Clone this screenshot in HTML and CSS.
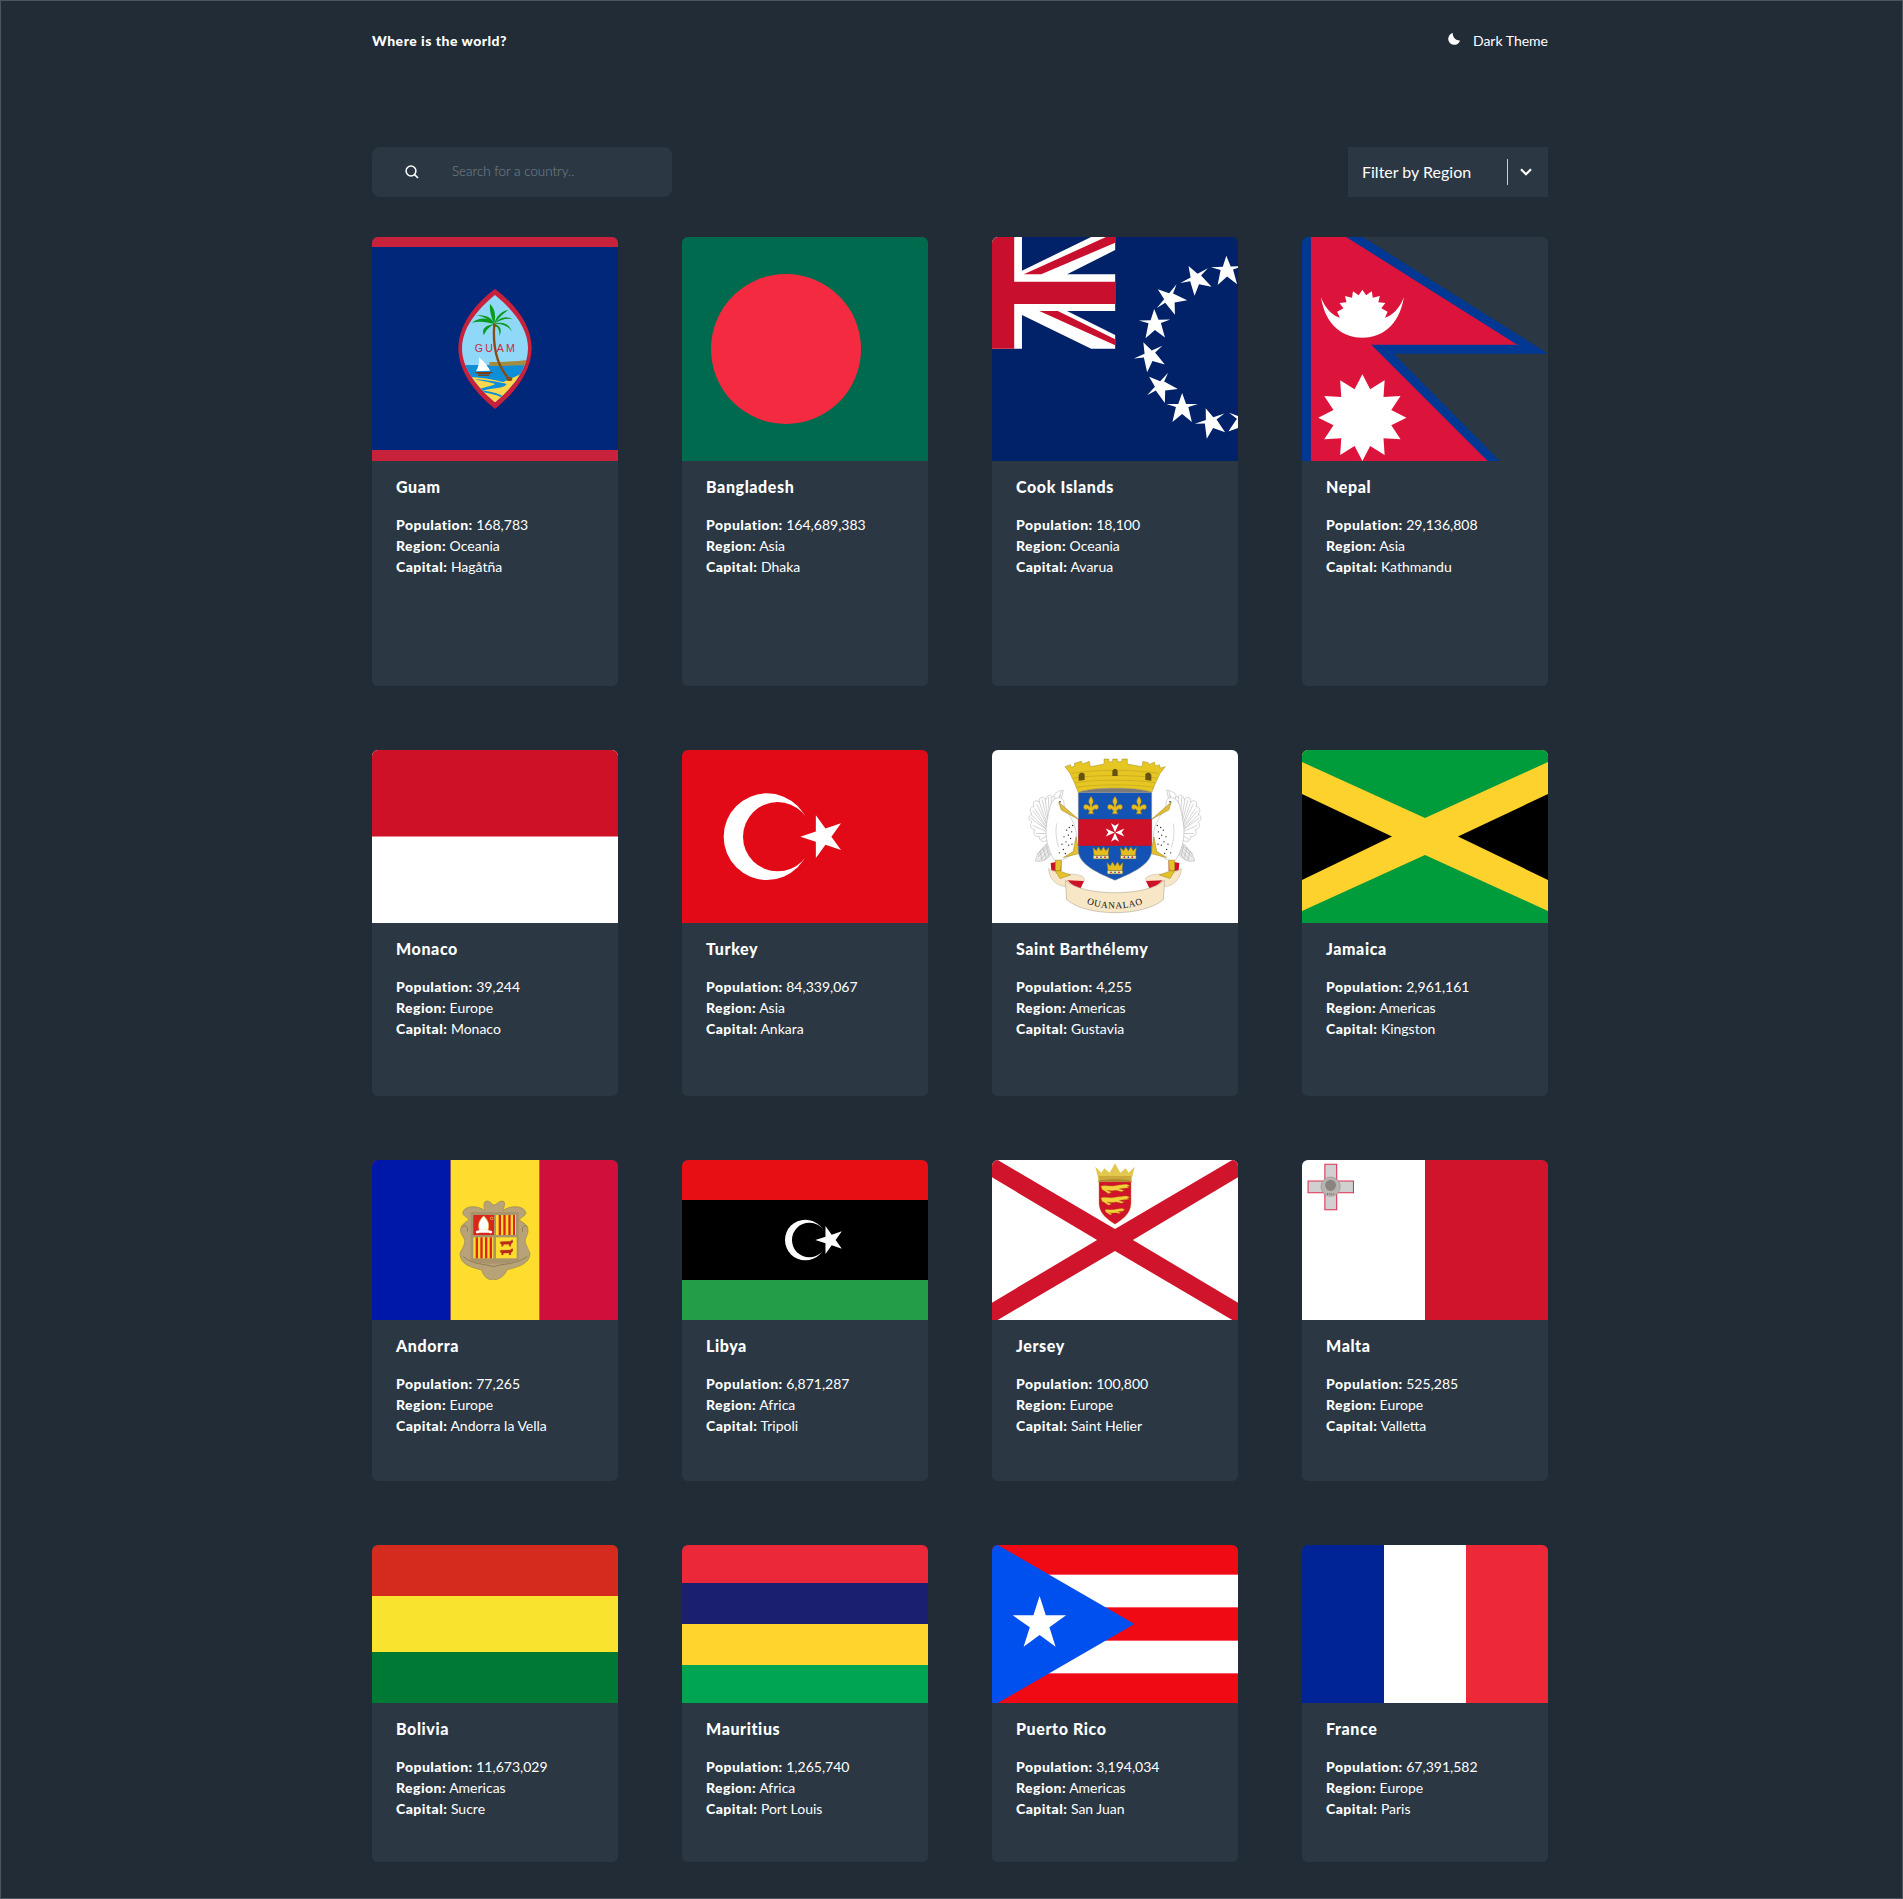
FILE: index.html
```html
<!DOCTYPE html>
<html lang="en">
<head>
<meta charset="utf-8">
<title>Where is the world?</title>
<link rel="stylesheet" href="styles.css">
</head>
<body>
<div class="page">
<header class="topbar">
  <h1 class="brand">Where is the world?</h1>
  <div class="theme">
    <svg class="moon" viewBox="0 0 12 12"><path d="M4.800 0A6 6 0 1 0 12 7.600 6.800 6.800 0 0 1 4.800 0Z" fill="#fff"/></svg>
    <span class="theme-label">Dark Theme</span>
  </div>
</header>

<section class="toolbar">
  <label class="search">
    <svg class="search-icon" viewBox="0 0 14 14"><circle cx="6" cy="6" r="4.900" fill="none" stroke="#fff" stroke-width="1.500"/><path d="M9.600 9.600 13 13" stroke="#fff" stroke-width="1.600"/></svg>
    <input class="search-input" type="text" placeholder="Search for a country..">
  </label>
  <div class="filter">
    <span class="filter-label">Filter by Region</span>
    <span class="filter-sep"></span>
    <svg class="chevron" viewBox="0 0 12 8"><path d="M1 1.200 6 6.200 11 1.200" fill="none" stroke="#fff" stroke-width="2.200"/></svg>
  </div>
</section>

<svg class="defs" width="0" height="0">
  <defs>
    <path id="star5" d="M0-16 3.800-5 15.200-5 6-1.900 9.400 12.900 0 4.900-9.400 12.900-6-1.900-15.200-5-3.800-5Z"/>
    <path id="fleur" d="M0-28C8-18 8-10 3-4L3 4C8-4 22-8 22 4 22 12 14 14 12 8 8 12 6 14 4 14L8 24-8 24-4 14C-6 14-8 12-12 8-14 14-22 12-22 4-22-8-8-4-3 4L-3-4C-8-10-8-18 0-28Z" fill="#e6bd1e" stroke="#a5851a" stroke-width="1.500"/>
    <g id="mini-crown">
      <path d="M-24-20-14-10-8-22 0-10 8-22 14-10 24-20 21 4-21 4Z" fill="#e6bd1e" stroke="#8f7a1c" stroke-width="1.500"/>
      <rect x="-23" y="4" width="46" height="10" fill="#f3e6a8" stroke="#8f7a1c" stroke-width="1.500"/>
      <circle cx="-12" cy="9" r="2.500" fill="#ce1126"/><circle cx="0" cy="9" r="2.500" fill="#1353b4"/><circle cx="12" cy="9" r="2.500" fill="#ce1126"/>
    </g>
    <g id="pelican">
      <g fill="#fff" stroke="#a9a9a9" stroke-width="1.500">
        <path d="M250 150C235 152 225 158 218 172 210 160 200 165 198 178 188 168 176 170 178 186 166 176 156 186 162 200 150 198 146 212 156 222 144 226 144 240 156 246 148 254 152 268 164 268 158 280 166 292 178 288 176 302 190 308 202 300L232 230Z"/>
        <path d="M214 262 244 153M212 262 224 168M210 262 205 170M208 264 186 178M206 266 170 192M204 268 158 212M202 270 152 234M200 274 158 256M202 280 168 280M206 284 182 298"/>
        <path d="M218 262 240 165M214 262 214 170M209 264 195 175M206 266 178 186M204 268 164 205M202 270 154 224"/>
        <path d="M200 312C185 322 170 345 166 362 188 368 208 355 222 330L216 306Z" fill="#ececec"/>
        <path d="M174 350 208 316M182 358 214 322M170 342 200 318M192 360 218 330M198 312 206 345M188 322 198 352M180 332 186 360"/>
      </g>
      <path d="M220 180C232 168 252 170 252 190 250 212 292 238 290 300 286 345 255 362 225 362 205 335 193 290 200 250 205 220 210 190 220 180Z" fill="#fff" stroke="#aaa" stroke-width="1.500"/>
      <path d="M230 250C226 270 228 300 236 320" fill="none" stroke="#999" stroke-width="1.200"/>
      <path d="M236 186 296 238 244 210Z" fill="#e0bd3a" stroke="#96801f" stroke-width="1.500"/>
      <circle cx="240" cy="185" r="2.400" fill="#222"/>
      <g fill="#222">
        <circle cx="278" cy="256" r="2"/><circle cx="268" cy="262" r="2"/><circle cx="260" cy="270" r="2"/><circle cx="275" cy="275" r="2"/><circle cx="265" cy="285" r="2"/><circle cx="252" cy="290" r="2"/><circle cx="272" cy="295" r="2"/><circle cx="258" cy="305" r="2"/><circle cx="246" cy="312" r="2"/><circle cx="266" cy="315" r="2"/><circle cx="250" cy="328" r="2"/><circle cx="238" cy="338" r="2"/><circle cx="276" cy="312" r="2"/><circle cx="256" cy="340" r="2"/>
      </g>
      <path d="M288 290 298 340 250 352 280 334Z" fill="#e6c22a" stroke="#96801f" stroke-width="1.500"/>
      <path d="M212 368 244 362 244 392 226 392 214 390Z" fill="#ce1126"/>
      <path d="M226 360V392H242L244 360Z" fill="#e6c22a" stroke="#96801f" stroke-width="1.500"/>
      <path d="M206 385C225 400 225 392 260 402 300 400 318 410 312 422 310 430 268 420 258 438 228 440 205 410 206 385Z" fill="#f7e7c6" stroke="#b8ac98" stroke-width="1.500"/>
      <path d="M226 392 238 392 272 404 240 415Z" fill="#e6c22a" stroke="#96801f" stroke-width="1.500"/>
      <path d="M262 420 312 422 298 452Z" fill="#ce1126"/>
    </g>
    <g id="lion">
      <path d="M-40-6C-30-12-15-4 0-8 12-10 26-12 33-12L42-8 34-5 40-2C30 0 20-1 12 2L26 6 18 10 4 6C-6 8-14 8-22 6L-10 12-18 16-32 6C-38 6-36-1-40-6Z" fill="#f3d13a" stroke="#a36c10" stroke-width="1"/>
    </g>
    <g id="bull">
      <path d="M-18-5 12-6 18-11 20-4 14 2 13 9 9 9 8 3-8 3-10 9-14 9-14 3-18 1Z" fill="#c0281e" stroke="#7c4a20" stroke-width=".8"/>
    </g>
    <clipPath id="seal-clip"><path d="M405 195C460 240 504 295 504 355 504 415 460 470 405 517 350 470 306 415 306 355 306 295 350 240 405 195Z"/></clipPath>
    <clipPath id="jersey-clip"><path d="M305 95H395V160C395 190 370 210 350 223 330 210 305 190 305 160Z"/></clipPath>
    <path id="ribbon-curve" d="M296 476C346 514 464 514 514 476"/>
  </defs>
</svg>

<main class="grid">

<article class="card">
  <svg class="flag flag-tall" viewBox="36 21 738 672" preserveAspectRatio="none">
    <rect x="36" y="21" width="738" height="672" fill="#c8213c"/>
    <rect x="36" y="51" width="738" height="609" fill="#01277a"/>
    <path d="M405 177C470 225 515 290 515 355 515 420 470 485 405 537 340 485 295 420 295 355 295 290 340 225 405 177Z" fill="#c8213c"/>
    <g clip-path="url(#seal-clip)">
      <rect x="290" y="190" width="230" height="340" fill="#8fd8f8"/>
      <rect x="290" y="405" width="230" height="60" fill="#0f8fd8"/>
      <path d="M388 396C430 396 470 394 502 390V406C470 406 420 408 388 408Z" fill="#a28c42"/>
      <path d="M318 442C360 440 395 448 430 456 450 448 480 432 505 424V530H300Z" fill="#fdd74e"/>
      <path d="M345 448C385 450 425 458 440 462 430 478 400 472 368 482 395 484 420 490 440 505L420 500C400 490 370 490 352 480 372 470 400 468 405 462 390 456 365 454 345 448Z" fill="#0f8fd8"/>
    </g>
    <path d="M403 280C398 340 404 400 448 448" fill="none" stroke="#8a4a12" stroke-width="7"/>
    <ellipse cx="448" cy="447" rx="9" ry="6" fill="#8a4a12"/>
    <g fill="#0b9a1f">
      <path d="M403 282C385 260 360 262 336 278 358 272 382 276 403 282Z"/>
      <path d="M403 282C380 285 362 295 372 316 378 298 390 290 403 282Z"/>
      <path d="M403 282C395 262 380 255 345 256 368 258 385 268 403 282Z"/>
      <path d="M403 282C408 255 405 238 390 222 388 240 393 262 403 282Z"/>
      <path d="M403 282C420 258 432 250 445 240 425 243 408 258 403 282Z"/>
      <path d="M403 282C425 266 442 264 458 268 438 256 418 262 403 282Z"/>
      <path d="M403 282C428 280 448 290 455 305 450 282 425 272 403 282Z"/>
      <path d="M403 282C415 292 420 305 418 318 428 300 420 285 403 282Z"/>
    </g>
    <path d="M403 280 412 290 399 290Z" fill="#8a4a12"/>
    <text class="seal-text" x="344" y="367">GU</text>
    <text class="seal-text" x="410" y="367">AM</text>
    <path d="M357 382C372 395 385 410 390 422L348 424C356 412 358 396 357 382Z" fill="#fff"/>
    <path d="M342 426H400L388 433H356Z" fill="#7e3b10"/>
    <path d="M354 436H388" stroke="#7e3b10" stroke-width="3"/>
  </svg>
  <div class="info">
    <h2 class="name">Guam</h2>
    <p class="row"><b>Population:</b> 168,783</p>
    <p class="row"><b>Region:</b> Oceania</p>
    <p class="row"><b>Capital:</b> Hagåtña</p>
  </div>
</article>

<article class="card">
  <svg class="flag flag-tall" viewBox="0 0 246 224" preserveAspectRatio="none">
    <rect width="246" height="224" fill="#006a4e"/>
    <circle cx="104" cy="112" r="75" fill="#f42a41"/>
  </svg>
  <div class="info">
    <h2 class="name">Bangladesh</h2>
    <p class="row"><b>Population:</b> 164,689,383</p>
    <p class="row"><b>Region:</b> Asia</p>
    <p class="row"><b>Capital:</b> Dhaka</p>
  </div>
</article>

<article class="card">
  <svg class="flag flag-tall" viewBox="32 21 665 672" preserveAspectRatio="none">
    <rect x="32" y="21" width="665" height="672" fill="#012169"/>
    <path d="M32 21H113V133H235L365 60V21H300L113 122ZM32 21H113V356H32ZM113 133H365V243H113ZM113 243H235L365 315V356H300L113 255Z" fill="#fff"/>
    <path d="M32 21H92V155H365V222H92V356H32Z" fill="#c8102e"/>
    <path d="M118 133 340 21 365 21 365 38 165 133ZM160 243 210 243 365 328 365 346Z" fill="#c8102e"/>
    <g fill="#fff">
      <use href="#star5" transform="translate(667 125) scale(2.800 3) rotate(-2)"/>
      <use href="#star5" transform="translate(585 150) scale(2.800 3) rotate(-29)"/>
      <use href="#star5" transform="translate(515 208) scale(2.800 3) rotate(-51)"/>
      <use href="#star5" transform="translate(472 285) scale(2.800 3) rotate(-2)"/>
      <use href="#star5" transform="translate(460 380) scale(2.800 3) rotate(-25)"/>
      <use href="#star5" transform="translate(490 472) scale(2.800 3) rotate(-48)"/>
      <use href="#star5" transform="translate(546 537) scale(2.800 3) rotate(0)"/>
      <use href="#star5" transform="translate(625 580) scale(2.800 3) rotate(-20)"/>
      <use href="#star5" transform="translate(708 578) scale(2.800 3) rotate(20)"/>
    </g>
  </svg>
  <div class="info">
    <h2 class="name">Cook Islands</h2>
    <p class="row"><b>Population:</b> 18,100</p>
    <p class="row"><b>Region:</b> Oceania</p>
    <p class="row"><b>Capital:</b> Avarua</p>
  </div>
</article>

<article class="card">
  <svg class="flag flag-tall" viewBox="871 20 664 672" preserveAspectRatio="none">
    <path d="M871 20H1035L1535 370H1118L1405 692H871Z" fill="#003893"/>
    <path d="M895 20H990L1452 343H1058L1372 692H895Z" fill="#dc143c"/>
    <path d="M922 200C935 290 985 322 1034 322 1083 322 1133 290 1146 200 1135 235 1112 258 1095 262L1102 244 1085 234 1096 218 1077 216 1081 197 1062 202 1059.500 183 1044 195 1034 178 1024 195 1008.500 183 1006 202 987 197 991 216 972 218 983 234 966 244 973 262C956 258 933 235 922 200Z" fill="#fff"/>
    <path d="M1034 432 1055 477 1094 450 1091 500 1137 497 1112 539 1153 562 1112 585 1137 627 1091 624 1094 674 1055 647 1034 692 1013 647 974 674 977 624 931 627 956 585 915 562 956 539 931 497 977 500 974 450 1013 477Z" fill="#fff"/>
  </svg>
  <div class="info">
    <h2 class="name">Nepal</h2>
    <p class="row"><b>Population:</b> 29,136,808</p>
    <p class="row"><b>Region:</b> Asia</p>
    <p class="row"><b>Capital:</b> Kathmandu</p>
  </div>
</article>

<article class="card">
  <svg class="flag flag-mid" viewBox="0 0 246 173" preserveAspectRatio="none">
    <rect width="246" height="173" fill="#fff"/>
    <rect width="246" height="86.500" fill="#ce1126"/>
  </svg>
  <div class="info">
    <h2 class="name">Monaco</h2>
    <p class="row"><b>Population:</b> 39,244</p>
    <p class="row"><b>Region:</b> Europe</p>
    <p class="row"><b>Capital:</b> Monaco</p>
  </div>
</article>

<article class="card">
  <svg class="flag flag-mid" viewBox="30 15 738 519" preserveAspectRatio="none">
    <rect x="30" y="15" width="738" height="519" fill="#e30a17"/>
    <circle cx="285" cy="275" r="130" fill="#fff"/>
    <circle cx="317" cy="275" r="104" fill="#e30a17"/>
    <path d="M385 275 431.500 259.800 431.600 211 460.400 250.500 507 235 478.200 275 507 315 460.400 299.500 431.600 339 431.500 290.200Z" fill="#fff"/>
  </svg>
  <div class="info">
    <h2 class="name">Turkey</h2>
    <p class="row"><b>Population:</b> 84,339,067</p>
    <p class="row"><b>Region:</b> Asia</p>
    <p class="row"><b>Capital:</b> Ankara</p>
  </div>
</article>

<article class="card">
  <svg class="flag flag-mid" viewBox="36 30 738 518" preserveAspectRatio="none">
    <rect x="36" y="30" width="738" height="518" fill="#fff"/>
    <use href="#pelican"/>
    <use href="#pelican" transform="translate(810 0) scale(-1 1)"/>
    <path d="M256 420C310 470 500 470 554 420L550 478C490 530 320 530 260 478Z" fill="#f7e7c6" stroke="#b8ac98" stroke-width="2"/>
    <text class="motto"><textPath href="#ribbon-curve" startOffset="50%">OUANALAO</textPath></text>
    <path d="M295 157H515V330C515 375 450 400 405 420 360 400 295 375 295 330Z" fill="#1353b4" stroke="#8a8a8a" stroke-width="1.500"/>
    <rect x="295" y="237" width="220" height="80" fill="#ce1126"/>
    <use href="#fleur" transform="translate(333 197)"/>
    <use href="#fleur" transform="translate(405 197)"/>
    <use href="#fleur" transform="translate(477 197)"/>
    <g fill="#fff" transform="translate(405 277)">
      <path d="M0-1-12-28 0-20 12-28Z"/><path d="M1 0 28-12 20 0 28 12Z"/><path d="M0 1 12 28 0 20-12 28Z"/><path d="M-1 0-28 12-20 0-28-12Z"/>
    </g>
    <use href="#mini-crown" transform="translate(363 342)"/>
    <use href="#mini-crown" transform="translate(445 342)"/>
    <use href="#mini-crown" transform="translate(405 387)"/>
    <path d="M255 80 271 74 274 82 284 78 283 70 304 64 308 72 318 68 328 64 331 80 372 72V57H386V65H398V57H412V65H426V57H442V72L486 80 489 64 505 68 507 74 523 66 526 78 538 74 541 84 556 80 540 100 527 128 515 157C480 140 330 140 295 157L283 128 270 100Z" fill="#e6c622" stroke="#a58d1d" stroke-width="1.500"/>
    <path d="M279 114C340 104 470 104 531 114M285 128C340 118 470 118 525 128M290 142C340 132 470 132 520 142M275 100C340 88 470 88 535 100" fill="none" stroke="#b79b1f" stroke-width="1.500"/>
    <path d="M296 122V104Q304 92 314 102V120ZM397 108V92Q405 80 413 92V108ZM496 120V102Q506 92 514 104V122Z" fill="#66520f"/>
    <path d="M295 157C330 140 480 140 515 157Z" fill="#7a7a7a"/>
  </svg>
  <div class="info">
    <h2 class="name">Saint Barthélemy</h2>
    <p class="row"><b>Population:</b> 4,255</p>
    <p class="row"><b>Region:</b> Americas</p>
    <p class="row"><b>Capital:</b> Gustavia</p>
  </div>
</article>

<article class="card">
  <svg class="flag flag-mid" viewBox="0 0 246 173" preserveAspectRatio="none">
    <rect width="246" height="173" fill="#fed22d"/>
    <path d="M0 0H246V12L123 68 0 12ZM0 161 123 105 246 161V173H0Z" fill="#009b3a"/>
    <path d="M0 44 90 86.500 0 130ZM246 44 156 86.500 246 130Z" fill="#000"/>
  </svg>
  <div class="info">
    <h2 class="name">Jamaica</h2>
    <p class="row"><b>Population:</b> 2,961,161</p>
    <p class="row"><b>Region:</b> Americas</p>
    <p class="row"><b>Capital:</b> Kingston</p>
  </div>
</article>

<article class="card">
  <svg class="flag flag-std" viewBox="-204 30 738 480" preserveAspectRatio="none">
    <rect x="-204" y="30" width="738" height="480" fill="#d0103a"/>
    <rect x="-204" y="30" width="236" height="480" fill="#0018a8"/>
    <rect x="32" y="30" width="266" height="480" fill="#fedd2e"/>
    <path d="M135 155C150 148 155 165 162 165 170 165 178 148 192 155 198 165 188 178 188 182 210 165 255 165 258 190 250 205 238 200 240 212 265 225 270 240 258 262 250 275 262 290 270 310 270 345 225 352 200 360 195 380 170 392 160 388 145 392 130 380 125 360 95 352 60 345 60 310 70 290 80 275 70 262 55 240 60 225 85 212 87 200 75 205 68 190 70 165 115 165 135 182 135 178 128 165 135 155Z" fill="#b8a378" stroke="#96835c" stroke-width="2"/>
    <path d="M68 230C78 222 85 232 82 245M262 230C252 222 245 232 248 245M70 320C100 345 130 340 160 350 190 340 225 345 262 320" fill="none" stroke="#8f7c56" stroke-width="3"/>
    <path d="M92 186H236V330C236 345 100 345 92 330Z" fill="#a8946c"/>
    <rect x="100" y="195" width="62" height="60" fill="#d8261c"/>
    <rect x="168" y="195" width="60" height="60" fill="#fedd2e"/>
    <rect x="100" y="262" width="60" height="63" fill="#fedd2e"/>
    <rect x="168" y="262" width="62" height="63" fill="#fedd2e"/>
    <g fill="#d8261c">
      <rect x="176" y="195" width="7" height="60"/><rect x="190" y="195" width="7" height="60"/><rect x="205" y="195" width="7" height="60"/><rect x="219" y="195" width="6" height="60"/>
      <rect x="107" y="262" width="7" height="63"/><rect x="121" y="262" width="7" height="63"/><rect x="135" y="262" width="7" height="63"/><rect x="149" y="262" width="7" height="63"/>
    </g>
    <path d="M131 198C146 212 148 225 144 240H118C114 225 116 212 131 198Z" fill="#fff" stroke="#f0d040" stroke-width="2"/>
    <path d="M108 244C118 238 144 238 156 244 158 250 152 252 146 248H118C112 252 106 250 108 244Z" fill="#fff"/>
    <circle cx="155" cy="205" r="4" fill="none" stroke="#f0d040" stroke-width="2"/>
    <use href="#bull" transform="translate(199 280)"/>
    <use href="#bull" transform="translate(199 306)"/>
  </svg>
  <div class="info">
    <h2 class="name">Andorra</h2>
    <p class="row"><b>Population:</b> 77,265</p>
    <p class="row"><b>Region:</b> Europe</p>
    <p class="row"><b>Capital:</b> Andorra la Vella</p>
  </div>
</article>

<article class="card">
  <svg class="flag flag-std" viewBox="30 15 738 480" preserveAspectRatio="none">
    <rect x="30" y="15" width="738" height="120" fill="#e70e14"/>
    <rect x="30" y="135" width="738" height="240" fill="#000"/>
    <rect x="30" y="375" width="738" height="120" fill="#239e46"/>
    <circle cx="400" cy="255" r="61" fill="#fff"/>
    <circle cx="412" cy="255" r="52" fill="#000"/>
    <path d="M430 255 460.400 245.100 460.400 213 479.200 239 509.600 229 490.800 255 509.600 281 479.200 271 460.400 297 460.400 264.900Z" fill="#fff"/>
  </svg>
  <div class="info">
    <h2 class="name">Libya</h2>
    <p class="row"><b>Population:</b> 6,871,287</p>
    <p class="row"><b>Region:</b> Africa</p>
    <p class="row"><b>Capital:</b> Tripoli</p>
  </div>
</article>

<article class="card">
  <svg class="flag flag-std" viewBox="6 30 688 480" preserveAspectRatio="none">
    <rect x="6" y="30" width="688" height="480" fill="#fff"/>
    <path d="M6 30H22L350 237 678 30H694V82L400 270 694 458V510H678L350 303 22 510H6V458L300 270 6 82Z" fill="#cf142b"/>
    <path d="M305 95 295 50 312 68 320 55 335 68 350 40 365 68 380 55 388 68 405 50 395 95Z" fill="#e3c850"/>
    <path d="M305 78H395V95H305Z" fill="#caa93a"/>
    <path d="M303 92C330 86 370 86 397 92V97H303Z" fill="#a88c2e"/>
    <path d="M305 95H395V160C395 190 370 210 350 223 330 210 305 190 305 160Z" fill="#cf142b" stroke="#e3c850" stroke-width="1"/>
    <g clip-path="url(#jersey-clip)">
      <use href="#lion" transform="translate(350 115)"/>
      <use href="#lion" transform="translate(350 150)"/>
      <use href="#lion" transform="translate(349 184) scale(.68)"/>
    </g>
  </svg>
  <div class="info">
    <h2 class="name">Jersey</h2>
    <p class="row"><b>Population:</b> 100,800</p>
    <p class="row"><b>Region:</b> Europe</p>
    <p class="row"><b>Capital:</b> Saint Helier</p>
  </div>
</article>

<article class="card">
  <svg class="flag flag-std" viewBox="874 30 688 480" preserveAspectRatio="none">
    <rect x="874" y="30" width="344" height="480" fill="#fff"/>
    <rect x="1218" y="30" width="344" height="480" fill="#cf142b"/>
    <path d="M938 43H971V93H1018V128H971V179H938V128H891V93H938Z" fill="#d0d0d0" stroke="#dc3050" stroke-width="3"/>
    <ellipse cx="954" cy="110" rx="27" ry="29" fill="#b8b3b0" stroke="#8c8682" stroke-width="1.500"/>
    <ellipse cx="954" cy="106" rx="15" ry="17" fill="#8a847e"/>
    <path d="M944 132H964" stroke="#222" stroke-width="2" stroke-dasharray="3 3"/>
  </svg>
  <div class="info">
    <h2 class="name">Malta</h2>
    <p class="row"><b>Population:</b> 525,285</p>
    <p class="row"><b>Region:</b> Europe</p>
    <p class="row"><b>Capital:</b> Valletta</p>
  </div>
</article>

<article class="card">
  <svg class="flag flag-low" viewBox="0 0 246 158" preserveAspectRatio="none">
    <rect width="246" height="51" fill="#d52b1e"/>
    <rect y="51" width="246" height="56" fill="#f9e32e"/>
    <rect y="107" width="246" height="51" fill="#007934"/>
  </svg>
  <div class="info">
    <h2 class="name">Bolivia</h2>
    <p class="row"><b>Population:</b> 11,673,029</p>
    <p class="row"><b>Region:</b> Americas</p>
    <p class="row"><b>Capital:</b> Sucre</p>
  </div>
</article>

<article class="card">
  <svg class="flag flag-low" viewBox="6 15 676 474" preserveAspectRatio="none">
    <rect x="6" y="15" width="676" height="114" fill="#ea2839"/>
    <rect x="6" y="129" width="676" height="123" fill="#1a206d"/>
    <rect x="6" y="252" width="676" height="123" fill="#ffd52d"/>
    <rect x="6" y="375" width="676" height="114" fill="#00a551"/>
  </svg>
  <div class="info">
    <h2 class="name">Mauritius</h2>
    <p class="row"><b>Population:</b> 1,265,740</p>
    <p class="row"><b>Region:</b> Africa</p>
    <p class="row"><b>Capital:</b> Port Louis</p>
  </div>
</article>

<article class="card">
  <svg class="flag flag-low" viewBox="858 15 677 474" preserveAspectRatio="none">
    <rect x="858" y="15" width="677" height="474" fill="#ef0a14"/>
    <rect x="858" y="104" width="677" height="98" fill="#fff"/>
    <rect x="858" y="302" width="677" height="98" fill="#fff"/>
    <path d="M858 15 874 15 1250 252 874 489H858Z" fill="#0050f0"/>
    <path d="M989 168 1006 226 1062 226 1016 262 1033 320 989 285 945 320 962 262 915 226 972 226Z" fill="#fff"/>
  </svg>
  <div class="info">
    <h2 class="name">Puerto Rico</h2>
    <p class="row"><b>Population:</b> 3,194,034</p>
    <p class="row"><b>Region:</b> Americas</p>
    <p class="row"><b>Capital:</b> San Juan</p>
  </div>
</article>

<article class="card">
  <svg class="flag flag-low" viewBox="0 0 246 158" preserveAspectRatio="none">
    <rect width="82" height="158" fill="#002395"/>
    <rect x="82" width="82" height="158" fill="#fff"/>
    <rect x="164" width="82" height="158" fill="#ed2939"/>
  </svg>
  <div class="info">
    <h2 class="name">France</h2>
    <p class="row"><b>Population:</b> 67,391,582</p>
    <p class="row"><b>Region:</b> Europe</p>
    <p class="row"><b>Capital:</b> Paris</p>
  </div>
</article>

</main>
</div>
</body>
</html>
```
FILE: styles.css
```css
* { box-sizing: border-box; }

html, body { margin: 0; padding: 0; }

body {
  background: #222c37;
  border: 1px solid #4a5560;
  color: #fff;
  font-family: "Lato", "Noto Sans", sans-serif;
  font-size: 14px;
  min-height: 1899px;
}

.page {
  width: 1176px;
  margin-left: 371px;
  padding-bottom: 36px;
}

.topbar {
  display: flex;
  align-items: center;
  justify-content: space-between;
  height: 80px;
}

.brand {
  margin: 0;
  font-size: 14px;
  font-weight: 900;
  letter-spacing: .5px;
  line-height: 20px;
}

.theme {
  display: flex;
  align-items: center;
  gap: 13px;
  font-size: 14px;
  font-weight: 400;
}

.theme-label {
  margin-top: -2px;
}

.moon {
  width: 12px;
  height: 12px;
  margin-top: -4px;
}

.toolbar {
  display: flex;
  justify-content: space-between;
  margin-top: 66px;
}

.search {
  display: flex;
  align-items: center;
  gap: 33px;
  width: 300px;
  height: 50px;
  padding-left: 33px;
  background: #2b3844;
  border-radius: 8px;
}

.search-icon {
  flex: none;
  width: 14px;
  height: 14px;
}

.search-input {
  flex: 1;
  min-width: 0;
  margin-top: -2px;
  padding: 0;
  border: 0;
  outline: 0;
  background: transparent;
  color: #fff;
  font: 300 13.400px "Lato", "Noto Sans", sans-serif;
}

.search-input::placeholder {
  color: #7a848e;
  opacity: 1;
}

.filter {
  display: flex;
  align-items: center;
  width: 200px;
  height: 50px;
  padding-left: 14px;
  background: #2b3844;
  font-size: 16px;
}

.filter-label {
  width: 145px;
  margin-top: -2px;
}

.filter-sep {
  flex: none;
  width: 1px;
  height: 26px;
  background: #c9ccd0;
}

.chevron {
  flex: none;
  width: 12px;
  height: 8px;
  margin-left: 12px;
}

.defs {
  position: absolute;
}

.grid {
  display: grid;
  grid-template-columns: repeat(4, 246px);
  grid-template-rows: 449px 346px 321px 317px;
  gap: 64px;
  margin-top: 40px;
}

.card {
  display: flex;
  flex-direction: column;
  overflow: hidden;
  background: #2b3844;
  border-radius: 6px;
}

.flag {
  display: block;
  flex: none;
  width: 100%;
}

.flag-tall { height: 224px; }
.flag-mid { height: 173px; }
.flag-std { height: 160px; }
.flag-low { height: 158px; }

.info {
  padding: 15px 24px;
}

.name {
  margin: 0 0 16px;
  font-size: 16px;
  font-weight: 900;
  letter-spacing: .6px;
  line-height: 22px;
}

.row {
  margin: 0;
  font-size: 14px;
  font-weight: 400;
  line-height: 21px;
}

.row b {
  font-weight: 900;
  letter-spacing: .45px;
}

.seal-text {
  fill: #d02640;
  font-family: "Liberation Sans", sans-serif;
  font-size: 32px;
  letter-spacing: 7px;
}

.motto {
  fill: #111;
  font-family: "Liberation Serif", serif;
  font-size: 28px;
  letter-spacing: 2px;
  text-anchor: middle;
}
```
